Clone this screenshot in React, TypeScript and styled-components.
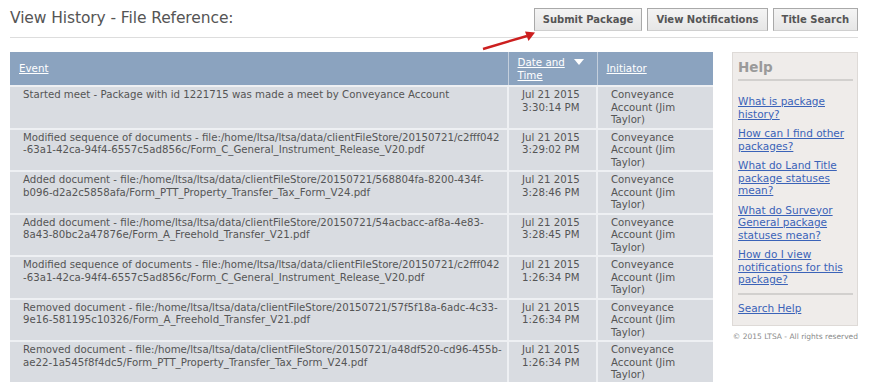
import React from 'react'
import styled, { createGlobalStyle } from 'styled-components'

const GlobalStyle = createGlobalStyle`
  body {
    margin: 0;
    background: #ffffff;
    font-family: 'DejaVu Sans', Tahoma, sans-serif;
    color: #555555;
  }
`

const rows = [
  {
    event: ['Started meet - Package with id 1221715 was made a meet by Conveyance Account'],
    date: 'Jul 21 2015',
    time: '3:30:14 PM',
  },
  {
    event: [
      'Modified sequence of documents - file:/home/ltsa/ltsa/data/clientFileStore/20150721/c2fff042',
      '-63a1-42ca-94f4-6557c5ad856c/Form_C_General_Instrument_Release_V20.pdf',
    ],
    date: 'Jul 21 2015',
    time: '3:29:02 PM',
  },
  {
    event: [
      'Added document - file:/home/ltsa/ltsa/data/clientFileStore/20150721/568804fa-8200-434f-',
      'b096-d2a2c5858afa/Form_PTT_Property_Transfer_Tax_Form_V24.pdf',
    ],
    date: 'Jul 21 2015',
    time: '3:28:46 PM',
  },
  {
    event: [
      'Added document - file:/home/ltsa/ltsa/data/clientFileStore/20150721/54acbacc-af8a-4e83-',
      '8a43-80bc2a47876e/Form_A_Freehold_Transfer_V21.pdf',
    ],
    date: 'Jul 21 2015',
    time: '3:28:45 PM',
  },
  {
    event: [
      'Modified sequence of documents - file:/home/ltsa/ltsa/data/clientFileStore/20150721/c2fff042',
      '-63a1-42ca-94f4-6557c5ad856c/Form_C_General_Instrument_Release_V20.pdf',
    ],
    date: 'Jul 21 2015',
    time: '1:26:34 PM',
  },
  {
    event: [
      'Removed document - file:/home/ltsa/ltsa/data/clientFileStore/20150721/57f5f18a-6adc-4c33-',
      '9e16-581195c10326/Form_A_Freehold_Transfer_V21.pdf',
    ],
    date: 'Jul 21 2015',
    time: '1:26:34 PM',
  },
  {
    event: [
      'Removed document - file:/home/ltsa/ltsa/data/clientFileStore/20150721/a48df520-cd96-455b-',
      'ae22-1a545f8f4dc5/Form_PTT_Property_Transfer_Tax_Form_V24.pdf',
    ],
    date: 'Jul 21 2015',
    time: '1:26:34 PM',
  },
]

const helpLinks = [
  ['What is package', 'history?'],
  ['How can I find other', 'packages?'],
  ['What do Land Title', 'package statuses', 'mean?'],
  ['What do Surveyor', 'General package', 'statuses mean?'],
  ['How do I view', 'notifications for this', 'package?'],
]

export default function App() {
  return (
    <>
      <GlobalStyle />
      <Page>
        <TopBar>
          <Title>View History - File Reference:</Title>
          <Tabs>
            <Tab>Submit Package</Tab>
            <Tab>View Notifications</Tab>
            <Tab>Title Search</Tab>
          </Tabs>
          <Arrow width='60' height='24' viewBox='0 0 60 24'>
            <line x1='2' y1='20' x2='46' y2='7' stroke='#cc1f1f' strokeWidth='2.4' />
            <polygon points='54,3.5 44,2.5 47.5,12' fill='#cc1f1f' />
          </Arrow>
        </TopBar>
        <Main>
          <HistoryTable>
            <colgroup>
              <col style={{ width: 498 }} />
              <col style={{ width: 89 }} />
              <col style={{ width: 116 }} />
            </colgroup>
            <thead>
              <tr>
                <HeadCell>
                  <HeadLink>Event</HeadLink>
                </HeadCell>
                <HeadCell>
                  <SortWrap>
                    <HeadLink>
                      Date and
                      <br />
                      Time
                    </HeadLink>
                    <SortArrow />
                  </SortWrap>
                </HeadCell>
                <HeadCell>
                  <HeadLink>Initiator</HeadLink>
                </HeadCell>
              </tr>
            </thead>
            <tbody>
              {rows.map((row, i) => (
                <tr key={i}>
                  <Cell>
                    {row.event.map((line, j) => (
                      <Line key={j}>{line}</Line>
                    ))}
                  </Cell>
                  <Cell>
                    <Line>{row.date}</Line>
                    <Line>{row.time}</Line>
                  </Cell>
                  <Cell>
                    <Line>Conveyance</Line>
                    <Line>Account (Jim</Line>
                    <Line>Taylor)</Line>
                  </Cell>
                </tr>
              ))}
            </tbody>
          </HistoryTable>
          <Side>
            <HelpBox>
              <HelpTitle>Help</HelpTitle>
              <HelpList>
                {helpLinks.map((lines, i) => (
                  <HelpLink key={i} href='#'>
                    {lines.map((l, j) => (
                      <Line key={j}>{l}</Line>
                    ))}
                  </HelpLink>
                ))}
              </HelpList>
              <SearchHelp href='#'>Search Help</SearchHelp>
            </HelpBox>
            <Copyright>© 2015 LTSA - All rights reserved</Copyright>
          </Side>
        </Main>
      </Page>
    </>
  )
}

const Page = styled.div`
  padding: 8px 30px 0 10px;
  width: 848px;
`

const TopBar = styled.div`
  position: relative;
  display: flex;
  justify-content: space-between;
  align-items: flex-end;
  border-bottom: 1px solid #dddddd;
  padding-bottom: 6px;
`

const Title = styled.h1`
  margin: 0 0 4px 0;
  font-size: 15.5px;
  font-weight: normal;
  color: #555555;
  letter-spacing: -0.1px;
`

const Tabs = styled.div`
  display: flex;
  gap: 5px;
`

const Tab = styled.div`
  height: 21px;
  line-height: 21px;
  padding: 0 8px;
  border: 1px solid #a9a9a9;
  border-bottom-color: #cfcfcf;
  background: linear-gradient(#f4f4f4, #e6e6e6);
  font-size: 10px;
  font-weight: bold;
  color: #555555;
`

const Arrow = styled.svg`
  position: absolute;
  left: 471px;
  top: 21px;
`

const Main = styled.div`
  display: flex;
  align-items: flex-start;
  gap: 19px;
  margin-top: 14px;
`

const HistoryTable = styled.table`
  width: 703px;
  table-layout: fixed;
  border-collapse: collapse;
  flex: none;
`

const HeadCell = styled.th`
  height: 33px;
  padding: 0 6px 0 9px;
  background: #8ba3bf;
  border-right: 1px solid #c4cfdc;
  text-align: left;
  font-weight: normal;
  font-size: 10.3px;
  line-height: 12.5px;
  vertical-align: middle;
  &:last-child {
    border-right: none;
  }
`

const HeadLink = styled.a`
  color: #ffffff;
  text-decoration: underline;
`

const SortWrap = styled.div`
  display: flex;
  align-items: flex-start;
  gap: 9px;
`

const SortArrow = styled.span`
  margin-top: 3px;
  width: 0;
  height: 0;
  border-left: 5px solid transparent;
  border-right: 5px solid transparent;
  border-top: 6px solid #ffffff;
`

const Cell = styled.td`
  height: 37px;
  padding: 2px 4px 1px 13px;
  background: #d9dce1;
  border: 2px solid #eef0f3;
  border-width: 2px 2px 0 0;
  vertical-align: top;
  font-size: 10.2px;
  line-height: 12.5px;
  color: #555555;
  &:last-child {
    border-right: none;
  }
`

const Line = styled.span`
  display: block;
  white-space: nowrap;
`

const Side = styled.div`
  width: 126px;
  flex: none;
`

const HelpBox = styled.div`
  background: #efecea;
  border: 1px solid #dedad7;
  padding: 6px 4px 11px 5px;
`

const HelpTitle = styled.div`
  font-size: 13.5px;
  font-weight: bold;
  color: #9a9a9a;
  padding-bottom: 4px;
  border-bottom: 2px solid #d2d0ce;
`

const HelpList = styled.div`
  display: flex;
  flex-direction: column;
  gap: 7px;
  padding: 14px 0 7px;
  border-bottom: 2px solid #d2d0ce;
`

const HelpLink = styled.a`
  color: #3b63b8;
  font-size: 10.5px;
  line-height: 12.5px;
  text-decoration: underline;
`

const SearchHelp = styled(HelpLink)`
  display: block;
  margin-top: 7px;
`

const Copyright = styled.div`
  margin-top: 6px;
  text-align: right;
  font-size: 7.5px;
  color: #8a8a8a;
`
